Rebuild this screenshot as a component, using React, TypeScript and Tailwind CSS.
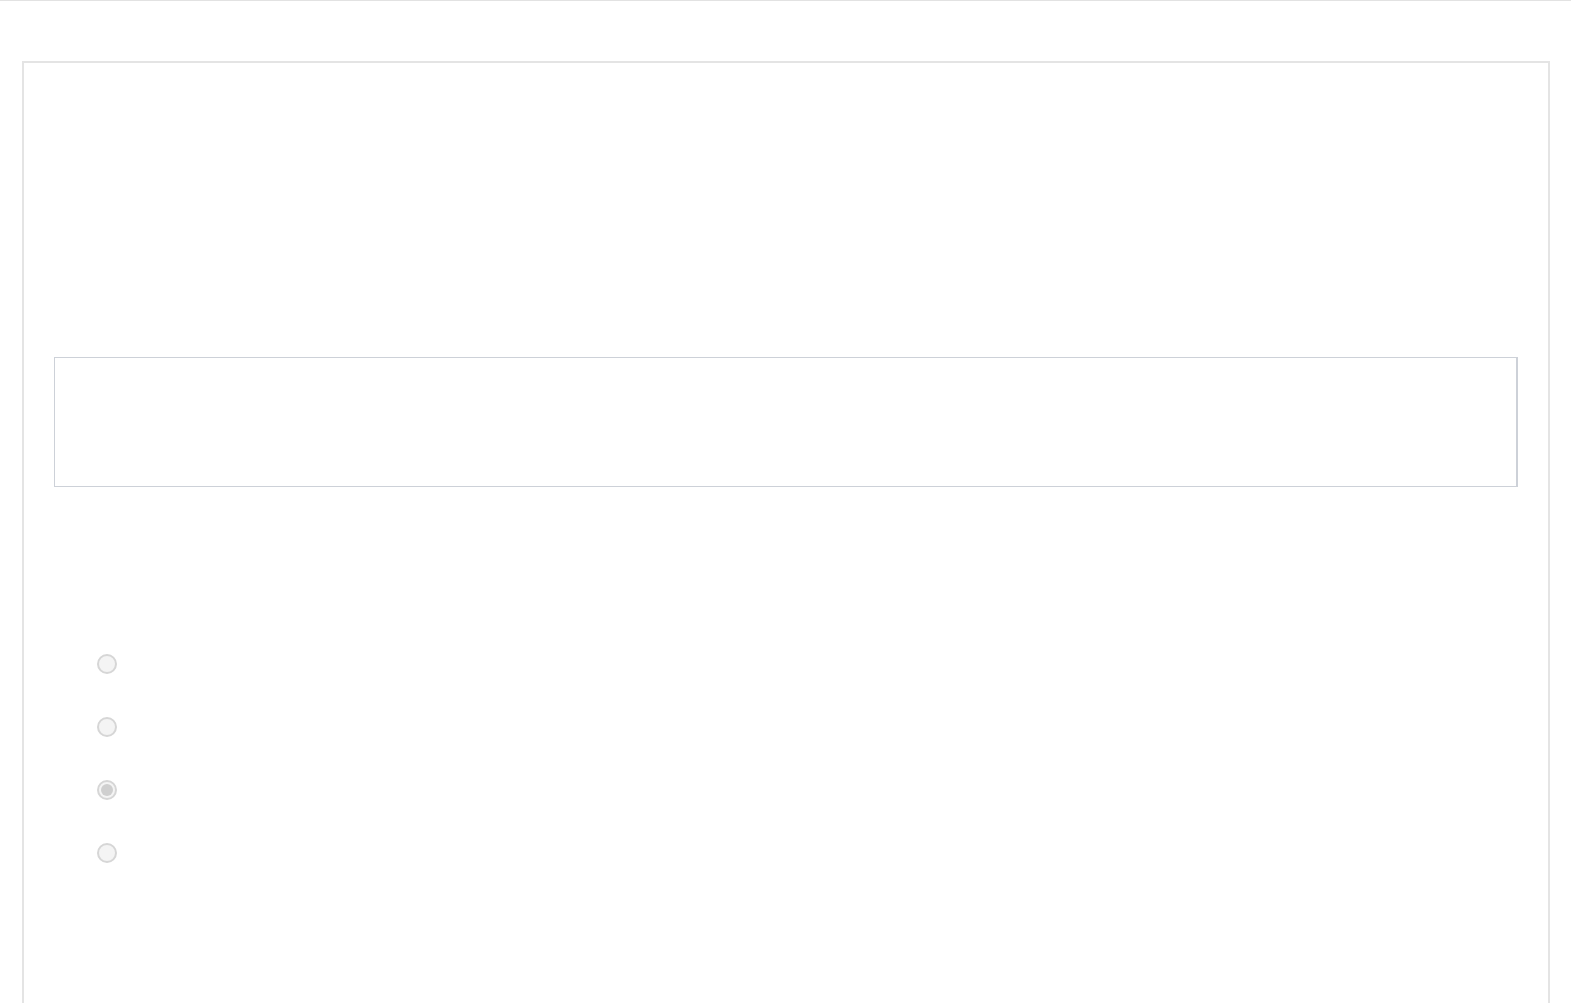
import React from 'react';

const options = [
  { id: 'opt-1', checked: false },
  { id: 'opt-2', checked: false },
  { id: 'opt-3', checked: true },
  { id: 'opt-4', checked: false },
];

function Radio({ checked }: { checked: boolean }) {
  return (
    <span className="flex h-[20px] w-[20px] items-center justify-center rounded-full border-2 border-[#d6d6d6] bg-[#f4f4f4]">
      {checked && <span className="h-[12px] w-[12px] rounded-full bg-[#cfcfcf]" />}
    </span>
  );
}

export default function App() {
  return (
    <div className="min-h-[1003px] bg-white border-t border-[#e2e2e2] font-['Liberation_Sans',sans-serif]">
      <div className="pl-[22px] pr-[21px] pt-[60px]">
        <div className="h-[960px] border-2 border-b-0 border-[#e4e4e4] px-[30px] pt-[294px]">
          {/* answer box */}
          <div className="h-[130px] border border-r-2 border-[#cdd1d8] bg-white" />

          {/* choices */}
          <div className="flex flex-col gap-[43px] pl-[43px] pt-[167px]">
            {options.map((o) => (
              <label key={o.id} className="flex items-center">
                <Radio checked={o.checked} />
              </label>
            ))}
          </div>
        </div>
      </div>
    </div>
  );
}
